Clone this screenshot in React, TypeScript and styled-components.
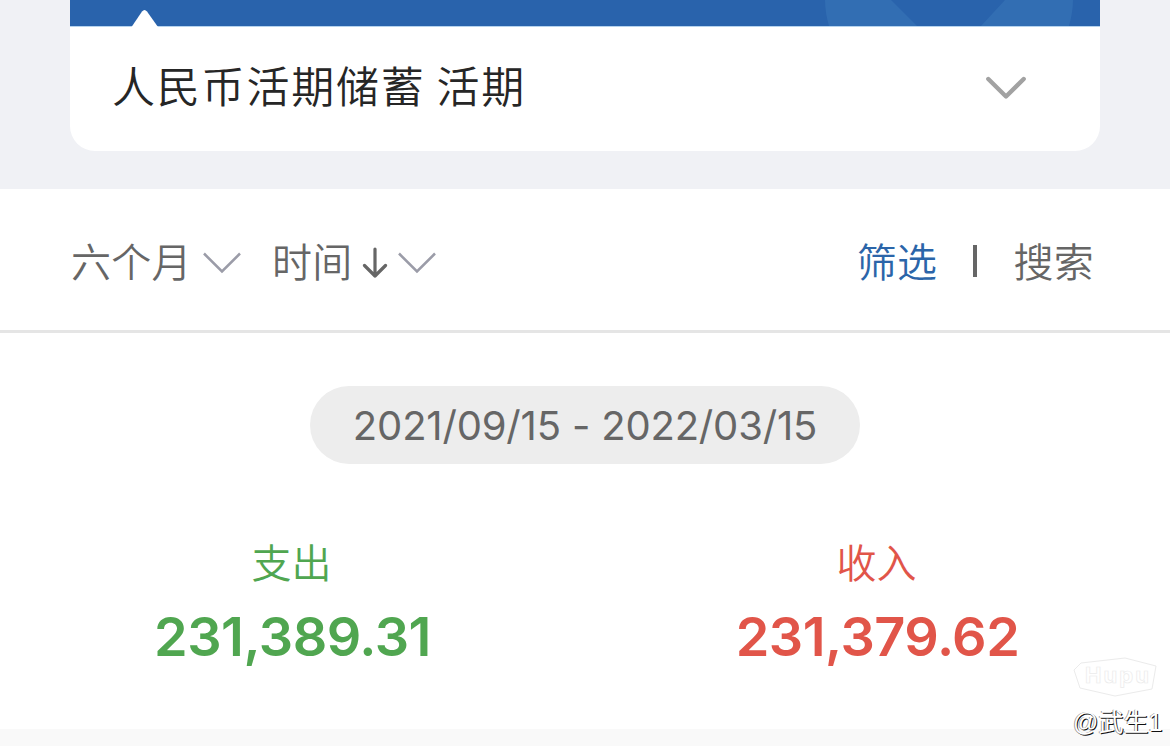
import React, { FC } from 'react';
import styled, { createGlobalStyle } from 'styled-components';

const GlobalStyle = createGlobalStyle`
  body {
    margin: 0;
    background-color: #fff;
    font-family: Inter, "Noto Sans CJK SC", sans-serif;
  }

  * {
    box-sizing: border-box;
  }

  svg {
    display: block;
    flex-shrink: 0;
  }
`

const Page = styled.div`
  position: relative;
  display: flex;
  flex-direction: column;
  width: 1170px;
  height: 746px;
  overflow: hidden;
`

const AccountSection = styled.section`
  height: 189px;
  padding: 0 70px;
  background-color: #f0f1f5;
`

const Card = styled.div`
  height: 151px;
  overflow: hidden;
  background-color: #fff;
  border-radius: 0 0 25px 25px;
`

const AccountRow = styled.div`
  display: flex;
  height: 124px;
  padding: 0 74px 2px 42px;
  align-items: center;
  justify-content: space-between;
`

const AccountName = styled.h1`
  margin: 0 0 2px;
  color: #262626;
  font-size: 43px;
  font-weight: 350;
  line-height: 60px;
  letter-spacing: 1.8px;
  word-spacing: -3px;
`

const FilterBar = styled.nav`
  display: flex;
  height: 144px;
  padding: 6px 76px 0 71px;
  align-items: center;
  border-bottom: 3px solid #e5e5e5;
`

const FilterItem = styled.div<{ gap: number }>`
  display: flex;
  align-items: center;
  margin-right: ${({ gap }) => gap}px;
`

const FilterText = styled.span<{ active?: boolean }>`
  color: ${({ active }) => (active ? '#2b65a9' : '#666')};
  font-size: 40px;
  font-weight: 350;
  line-height: 56px;
  letter-spacing: 0.3px;
`

const Actions = styled.div`
  display: flex;
  margin-left: auto;
  align-items: center;
`

const Divider = styled.span`
  width: 4px;
  height: 32px;
  margin: -4px 36px 0;
  background-color: #666;
`

const Summary = styled.main`
  display: flex;
  height: 396px;
  padding-top: 53px;
  flex-direction: column;
  align-items: center;
`

const DateRange = styled.div`
  width: 550px;
  height: 78px;
  color: #666;
  font-size: 40px;
  line-height: 79px;
  letter-spacing: -0.18px;
  text-align: center;
  border-radius: 39px;
  background-color: #ededed;
`

const Totals = styled.div`
  display: grid;
  width: 1170px;
  margin-top: 72px;
  grid-template-columns: 1fr 1fr;
`

const Total = styled.div<{ color: string }>`
  display: flex;
  color: ${({ color }) => color};
  flex-direction: column;
  align-items: center;
`

const TotalLabel = styled.span`
  font-size: 40px;
  font-weight: 350;
  line-height: 56px;
  padding-right: 2px;
`

const TotalValue = styled.strong`
  font-size: 54px;
  font-weight: 600;
  line-height: 64px;
  letter-spacing: -0.5px;
  margin-top: 13px;
`

const Footer = styled.footer`
  flex: 1;
  background-color: #f9f9f9;
`

const Watermark = styled.div`
  position: absolute;
  left: 1073px;
  top: 657px;
  width: 97px;
`

const WatermarkName = styled.span`
  display: block;
  margin-top: 7px;
  color: #fff;
  font-family: "Liberation Sans", "Noto Sans CJK SC", sans-serif;
  font-size: 25px;
  line-height: 36px;
  white-space: nowrap;
  text-shadow: 1px 1px 0 #111, -1px 0 0 rgba(0, 0, 0, 0.4);
`

const totals = [
  { label: '支出', value: '231,389.31', color: '#50a650' },
  { label: '收入', value: '231,379.62', color: '#e15549' },
]

const CardBanner: FC = () => (
  <svg width="1030" height="27" viewBox="0 0 1030 27">
    <rect width="1030" height="26" fill="#2963ac" />
    <path d="M755 0H821L847 26H759Q755 12 755 0ZM1003 0H935L911 26H999Q1003 12 1003 0Z" fill="#326eb3" />
    <rect y="26" width="1030" height="1" fill="#b5d3ee" />
    <path d="M61.500 27L72 11.500Q74.500 8.500 77 11.500L88 27Z" fill="#fff" />
  </svg>
)

const FilterArrow: FC = () => (
  <svg width="38" height="22" viewBox="0 0 38 22" fill="none">
    <path d="M1 1.500L19 19.500L37 1.500" stroke="#9b9ca8" strokeWidth="2.500" />
  </svg>
)

const Period = styled(FilterItem)`
  gap: 11px;
`

const App: FC = () => {
  return (
    <Page>
      <GlobalStyle />
      <AccountSection>
        <Card>
          <CardBanner />
          <AccountRow>
            <AccountName>人民币活期储蓄 活期</AccountName>
            <svg width="40" height="24" viewBox="0 0 40 24" fill="none">
              <path d="M2.300 3L20 20.500L37.700 3" stroke="#a2a2a2" strokeWidth="4.400" strokeLinecap="round" strokeLinejoin="round" />
            </svg>
          </AccountRow>
        </Card>
      </AccountSection>
      <FilterBar>
        <Period gap={31}>
          <FilterText>六个月</FilterText>
          <FilterArrow />
        </Period>
        <FilterItem gap={0}>
          <FilterText>时间</FilterText>
          <svg width="45" height="32" viewBox="0 0 45 32" fill="none">
            <path d="M22 2V29M11.500 18.500L22 29L32.500 18.500" stroke="#666" strokeWidth="3.200" strokeLinecap="round" strokeLinejoin="round" />
          </svg>
          <FilterArrow />
        </FilterItem>
        <Actions>
          <FilterText active>筛选</FilterText>
          <Divider />
          <FilterText>搜索</FilterText>
        </Actions>
      </FilterBar>
      <Summary>
        <DateRange>2021/09/15 - 2022/03/15</DateRange>
        <Totals>
          {totals.map((item) => (
            <Total key={item.label} color={item.color}>
              <TotalLabel>{item.label}</TotalLabel>
              <TotalValue>{item.value}</TotalValue>
            </Total>
          ))}
        </Totals>
      </Summary>
      <Footer />
      <Watermark>
        <svg width="84" height="40" viewBox="0 0 84 40" fill="none" stroke="#ebebeb">
          <path d="M1 13L8 6L52 1L83 9L79 32L42 39L7 31Z" />
          <text x="12" y="26" fontSize="22" fontWeight="700" fontFamily="Inter" textLength="64" strokeWidth="0.700">Hupu</text>
        </svg>
        <WatermarkName>@武生1</WatermarkName>
      </Watermark>
    </Page>
  );
};

export default App;
